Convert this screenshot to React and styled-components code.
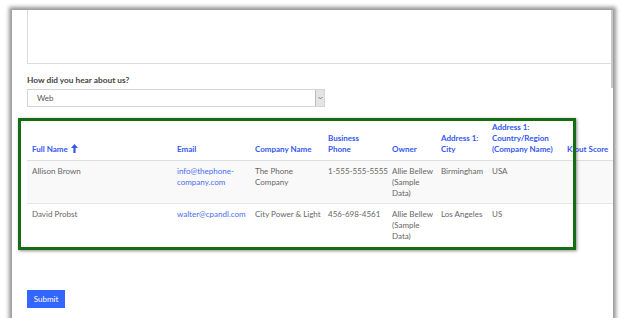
import React from "react";
import styled, { createGlobalStyle } from "styled-components";

const GlobalStyle = createGlobalStyle`
  html, body {
    margin: 0;
    padding: 0;
    background: #fff;
  }
  body {
    font-family: Lato, "Open Sans", sans-serif;
  }
`;

const columns = [
  { key: "name", label: ["Full Name"], width: 145, sorted: true },
  { key: "email", label: ["Email"], width: 78 },
  { key: "company", label: ["Company Name"], width: 73 },
  { key: "phone", label: ["Business", "Phone"], width: 64 },
  { key: "owner", label: ["Owner"], width: 49 },
  { key: "city", label: ["Address 1:", "City"], width: 51 },
  { key: "country", label: ["Address 1:", "Country/Region", "(Company Name)"], width: 75 },
  { key: "klout", label: ["Klout Score"], width: 60 },
];

const rows = [
  {
    id: 1,
    name: ["Allison Brown"],
    email: ["info@thephone-", "company.com"],
    company: ["The Phone", "Company"],
    phone: ["1-555-555-5555"],
    owner: ["Allie Bellew", "(Sample", "Data)"],
    city: ["Birmingham"],
    country: ["USA"],
    klout: [],
  },
  {
    id: 2,
    name: ["David Probst"],
    email: ["walter@cpandl.com"],
    company: ["City Power & Light"],
    phone: ["456-698-4561"],
    owner: ["Allie Bellew", "(Sample", "Data)"],
    city: ["Los Angeles"],
    country: ["US"],
    klout: [],
  },
];

const tableWidth = columns.reduce((s, c) => s + c.width, 0);

function Lines({ lines }) {
  return lines.map((l, i) => (
    <React.Fragment key={i}>
      {i > 0 && <br />}
      {l}
    </React.Fragment>
  ));
}

export default function App() {
  return (
    <>
      <GlobalStyle />
      <Frame>
        <Scroll />
        <TextArea />
        <Label>How did you hear about us?</Label>
        <Select>
          <span>Web</span>
          <Caret>
            <svg width="5" height="4" viewBox="0 0 5 4">
              <path d="M0.5 1 L2.5 3 L4.5 1" fill="none" stroke="#777" strokeWidth="0.9" />
            </svg>
          </Caret>
        </Select>

        <Grid style={{ width: tableWidth }}>
          <colgroup>
            {columns.map((c) => (
              <col key={c.key} style={{ width: c.width }} />
            ))}
          </colgroup>
          <thead>
            <tr>
              {columns.map((c) => (
                <Th key={c.key}>
                  <Lines lines={c.label} />
                  {c.sorted && (
                    <SortIcon width="7" height="9" viewBox="0 0 7 9">
                      <path d="M3.5 0 L7 4 L4.6 4 L4.6 9 L2.4 9 L2.4 4 L0 4 Z" fill="#3457f2" />
                    </SortIcon>
                  )}
                </Th>
              ))}
            </tr>
          </thead>
          <tbody>
            {rows.map((r, i) => (
              <Row key={r.id} $shaded={i % 2 === 0}>
                {columns.map((c) => (
                  <Td key={c.key} $link={c.key === "email"}>
                    <Lines lines={r[c.key]} />
                  </Td>
                ))}
              </Row>
            ))}
          </tbody>
        </Grid>

        <Submit>Submit</Submit>
        <Highlight />
      </Frame>
    </>
  );
}

const Frame = styled.div`
  position: relative;
  box-sizing: border-box;
  margin: 10px 0 0 12px;
  width: 601px;
  height: 308px;
  padding: 0 0 0 15px;
  background: #fff;
  overflow: hidden;
  box-shadow: 0 0 4px 3px rgba(0, 0, 0, 0.42);
`;

const Scroll = styled.div`
  position: absolute;
  top: 0;
  right: 0;
  width: 2px;
  height: 78px;
  background: #c8c8c8;
`;

const TextArea = styled.div`
  box-sizing: border-box;
  height: 54px;
  border: 1px solid #dcdcdc;
  border-top: none;
  border-right: none;
`;

const Label = styled.div`
  margin-top: 11px;
  font-size: 8.3px;
  line-height: 11px;
  font-weight: 700;
  color: #444;
`;

const Select = styled.div`
  box-sizing: border-box;
  margin-top: 3px;
  width: 298px;
  height: 18px;
  display: flex;
  align-items: center;
  justify-content: space-between;
  padding-left: 9px;
  border: 1px solid #d4d4d4;
  font-size: 8px;
  color: #555;
`;

const Caret = styled.div`
  box-sizing: border-box;
  width: 9px;
  height: 16px;
  display: flex;
  align-items: center;
  justify-content: center;
  background: #e4e4e4;
  border-left: 1px solid #bdbdbd;
`;

const Grid = styled.table`
  margin-top: 15px;
  table-layout: fixed;
  border-collapse: collapse;
  font-size: 8px;
  line-height: 11px;
`;

const Th = styled.th`
  padding: 0 0 5px 5px;
  vertical-align: bottom;
  text-align: left;
  font-weight: 700;
  color: #3457f2;
  white-space: nowrap;
  border-bottom: 1px solid #dedede;
`;

const SortIcon = styled.svg`
  margin-left: 3px;
  vertical-align: -1px;
`;

const Row = styled.tr`
  background: ${(p) => (p.$shaded ? "#f9f9f9" : "#fff")};
  border-bottom: 1px solid ${(p) => (p.$shaded ? "#e6e6e6" : "transparent")};
`;

const Td = styled.td`
  padding: 5px 0 4px 5px;
  vertical-align: top;
  white-space: nowrap;
  color: ${(p) => (p.$link ? "#4a6cf0" : "#666")};
`;

const Submit = styled.button`
  margin-top: 43px;
  width: 38px;
  height: 18px;
  padding: 0;
  border: none;
  background: #3366ff;
  color: #fff;
  font-family: Lato, sans-serif;
  font-size: 8px;
`;

const Highlight = styled.div`
  position: absolute;
  left: 6px;
  top: 108px;
  width: 558px;
  height: 132px;
  box-sizing: border-box;
  border: 3px solid #146c14;
  box-shadow: 1px 1px 3px rgba(0, 0, 0, 0.45);
  pointer-events: none;
`;
